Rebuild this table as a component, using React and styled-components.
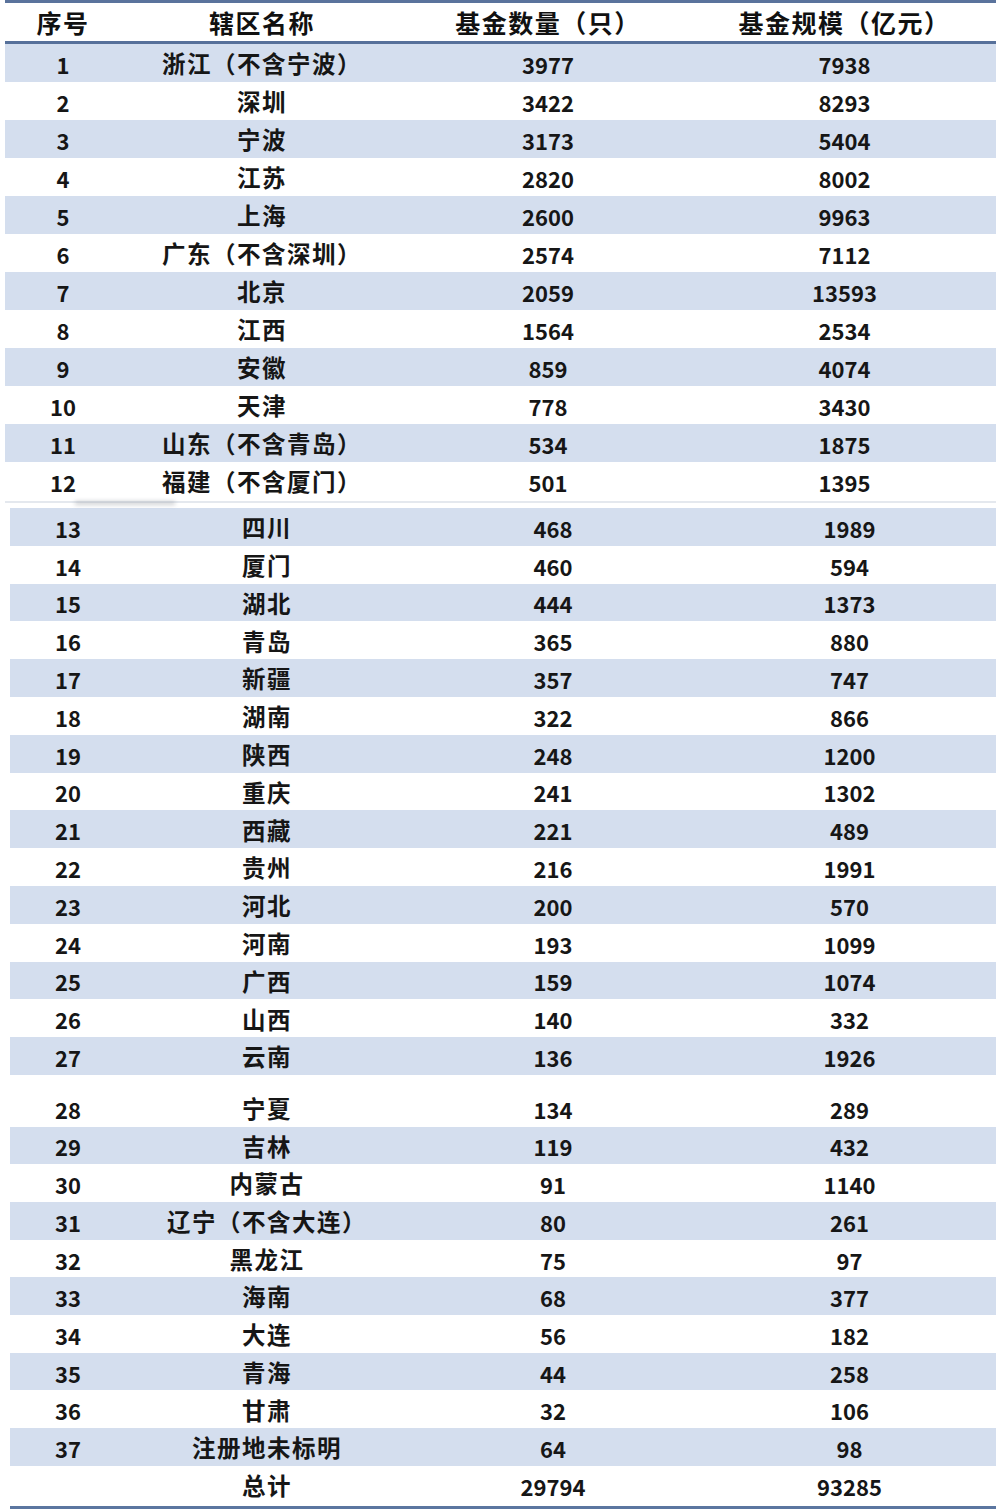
import React from "react";
import styled, { createGlobalStyle } from "styled-components";

const GlobalStyle = createGlobalStyle`
    html, body {
        margin: 0;
        padding: 0;
        background: #ffffff;
    }
    body {
        font-family: "Noto Sans CJK SC", "Noto Sans", sans-serif;
        color: #141414;
    }
`;

const header = ["序号", "辖区名称", "基金数量（只）", "基金规模（亿元）"];

// 截图由三张照片拼成，每段略有偏移
const segments = [
    {
        left: 5,
        rowHeight: 38,
        gap: 8,
        rows: [
            [1, "浙江（不含宁波）", 3977, 7938],
            [2, "深圳", 3422, 8293],
            [3, "宁波", 3173, 5404],
            [4, "江苏", 2820, 8002],
            [5, "上海", 2600, 9963],
            [6, "广东（不含深圳）", 2574, 7112],
            [7, "北京", 2059, 13593],
            [8, "江西", 1564, 2534],
            [9, "安徽", 859, 4074],
            [10, "天津", 778, 3430],
            [11, "山东（不含青岛）", 534, 1875],
            [12, "福建（不含厦门）", 501, 1395],
        ],
    },
    {
        left: 10,
        rowHeight: 37.8,
        gap: 14,
        rows: [
            [13, "四川", 468, 1989],
            [14, "厦门", 460, 594],
            [15, "湖北", 444, 1373],
            [16, "青岛", 365, 880],
            [17, "新疆", 357, 747],
            [18, "湖南", 322, 866],
            [19, "陕西", 248, 1200],
            [20, "重庆", 241, 1302],
            [21, "西藏", 221, 489],
            [22, "贵州", 216, 1991],
            [23, "河北", 200, 570],
            [24, "河南", 193, 1099],
            [25, "广西", 159, 1074],
            [26, "山西", 140, 332],
            [27, "云南", 136, 1926],
        ],
    },
    {
        left: 10,
        rowHeight: 37.7,
        gap: 0,
        rows: [
            [28, "宁夏", 134, 289],
            [29, "吉林", 119, 432],
            [30, "内蒙古", 91, 1140],
            [31, "辽宁（不含大连）", 80, 261],
            [32, "黑龙江", 75, 97],
            [33, "海南", 68, 377],
            [34, "大连", 56, 182],
            [35, "青海", 44, 258],
            [36, "甘肃", 32, 106],
            [37, "注册地未标明", 64, 98],
            ["", "总计", 29794, 93285],
        ],
    },
];

export default function App() {
    return (
        <>
            <GlobalStyle />
            <Page>
                <HeaderRow>
                    {header.map((h) => (
                        <HeadCell key={h}>{h}</HeadCell>
                    ))}
                </HeaderRow>
                {segments.map((seg, si) => (
                    <Segment key={si} $left={seg.left} $gap={seg.gap} $seam={si === 0}>
                        {seg.rows.map((r, i) => (
                            <Row
                                key={i}
                                $h={seg.rowHeight}
                                $blue={typeof r[0] === "number" && r[0] % 2 === 1}
                            >
                                <Cell>{r[0]}</Cell>
                                <NameCell>{r[1]}</NameCell>
                                <Cell>{r[2]}</Cell>
                                <Cell>{r[3]}</Cell>
                            </Row>
                        ))}
                    </Segment>
                ))}
                <BottomRule />
            </Page>
        </>
    );
}

const Page = styled.div`
    width: 1000px;
    height: 1509px;
    display: flex;
    flex-direction: column;
    overflow: hidden;

    > * {
        flex-shrink: 0;
    }
`;

const cols = "116px 282px 290px 303px";

const HeaderRow = styled.div`
    display: grid;
    grid-template-columns: ${cols};
    box-sizing: border-box;
    margin-left: 5px;
    width: 991px;
    height: 44px;
    border-top: 3px solid #5a739c;
    border-bottom: 3px solid #56709a;
    align-items: center;
    background: #ffffff;
`;

const HeadCell = styled.div`
    text-align: center;
    font-size: 25px;
    font-weight: 700;
    color: #111111;
    line-height: 1;
    letter-spacing: 1.5px;
`;

const Segment = styled.div`
    position: relative;
    margin-left: ${(p) => p.$left}px;
    width: ${(p) => 996 - p.$left}px;
    display: flex;
    flex-direction: column;
    padding-bottom: ${(p) => p.$gap}px;

    ${(p) =>
        p.$seam &&
        `
        &::after {
            content: "";
            position: absolute;
            left: 0;
            right: 0;
            bottom: 5px;
            height: 2px;
            background: #e4e8ee;
        }
        &::before {
            content: "";
            position: absolute;
            left: 70px;
            width: 100px;
            bottom: 3px;
            height: 4px;
            background: rgba(120, 125, 135, 0.35);
            filter: blur(2px);
            z-index: 1;
        }
    `}
`;

const Row = styled.div`
    display: grid;
    grid-template-columns: ${cols};
    height: ${(p) => p.$h}px;
    align-items: center;
    background: ${(p) => (p.$blue ? "#d4deee" : "#ffffff")};
`;

const Cell = styled.div`
    text-align: center;
    font-size: 22px;
    font-weight: 700;
    color: #161616;
    line-height: 1;
    padding-top: 2px;
`;

const NameCell = styled(Cell)`
    font-size: 23.5px;
    letter-spacing: 1.5px;
`;

const BottomRule = styled.div`
    margin-left: 10px;
    width: 986px;
    height: 4px;
    margin-top: 2px;
    background: #5b76a0;
`;
